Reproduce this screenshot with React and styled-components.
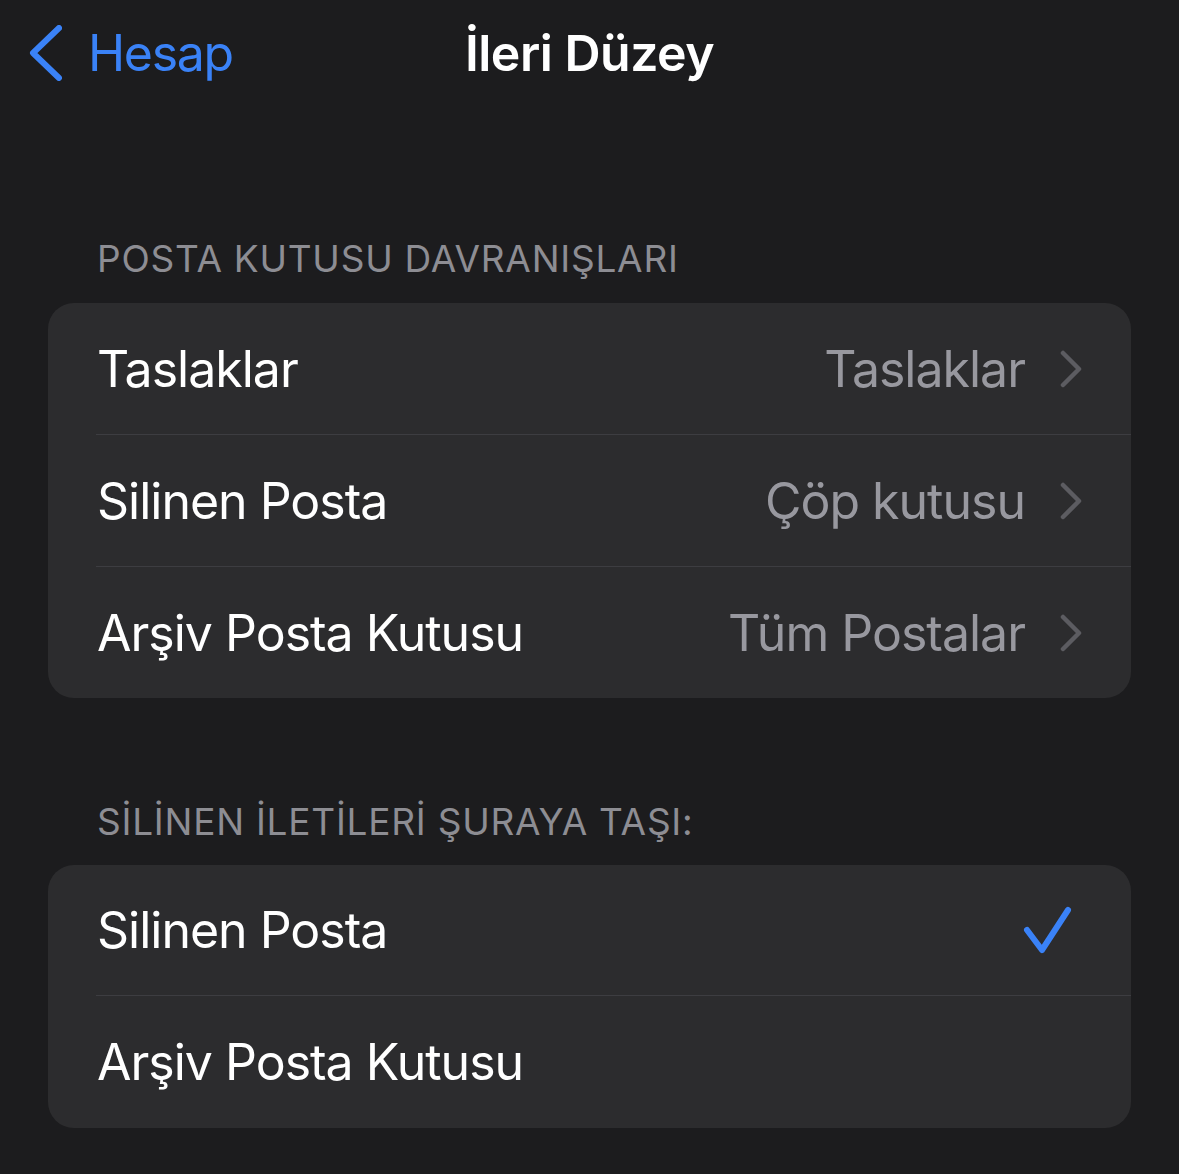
import React from 'react';
import styled, { createGlobalStyle } from 'styled-components';

const GlobalStyle = createGlobalStyle`
  html, body {
    margin: 0;
    padding: 0;
    background: #1c1c1e;
  }
  body {
    font-family: Inter, "Noto Sans", "Liberation Sans", sans-serif;
    -webkit-font-smoothing: antialiased;
  }
`;

const Screen = styled.div`
  min-height: 1174px;
  background: #1c1c1e;
  padding: 0 48px;
  box-sizing: border-box;
`;

const NavBar = styled.div`
  height: 106px;
  display: grid;
  grid-template-columns: 1fr auto 1fr;
  align-items: center;
  margin: 0 -48px;
  padding: 0 28px;
`;

const BackButton = styled.div`
  display: flex;
  align-items: center;
  gap: 26px;
  color: #3a82f7;
  font-size: 50px;
  letter-spacing: -1.3px;
`;

const Title = styled.div`
  color: #ffffff;
  font-size: 50px;
  font-weight: 600;
  letter-spacing: -0.5px;
`;

const SectionLabel = styled.div`
  color: #8d8d93;
  font-size: 37px;
  line-height: 46px;
  padding-left: 49px;
  margin-top: ${(p) => p.$top}px;
  margin-bottom: ${(p) => p.$bottom}px;
  letter-spacing: 0.75px;
`;

const Card = styled.div`
  background: #2c2c2e;
  border-radius: 26px;
  overflow: hidden;
`;

const Row = styled.div`
  height: ${(p) => p.$h}px;
  display: flex;
  align-items: center;
  padding: 0 49px;
`;

const Divider = styled.div`
  height: 1px;
  margin-left: 48px;
  background: #3d3d41;
`;

const Label = styled.div`
  flex: 1;
  color: #ffffff;
  font-size: 50px;
  letter-spacing: -1px;
`;

const Value = styled.div`
  color: #98989f;
  font-size: 50px;
  letter-spacing: -1px;
  margin-right: 35px;
`;

const CheckWrap = styled.div`
  display: flex;
  margin-right: 10px;
`;

const Chevron = () => (
  <svg width="22" height="38" viewBox="0 0 22 38">
    <path d="M3 3 L19 19 L3 35" fill="none" stroke="#5c5c61" strokeWidth="4.5" strokeLinecap="round" strokeLinejoin="round" />
  </svg>
);

const BackChevron = () => (
  <svg width="34" height="56" viewBox="0 0 34 56">
    <path d="M31 3 L5 28 L31 53" fill="none" stroke="#3a82f7" strokeWidth="6" strokeLinecap="round" strokeLinejoin="round" />
  </svg>
);

const Check = () => (
  <svg width="50" height="50" viewBox="0 0 50 50">
    <path d="M5 25 L20 45 L46 5" fill="none" stroke="#3a82f7" strokeWidth="6" strokeLinecap="round" strokeLinejoin="round" />
  </svg>
);

const NavRow = ({ label, value, h }) => (
  <Row $h={h}>
    <Label>{label}</Label>
    <Value>{value}</Value>
    <Chevron />
  </Row>
);

const SelectRow = ({ label, checked, h }) => (
  <Row $h={h}>
    <Label>{label}</Label>
    {checked && (
      <CheckWrap>
        <Check />
      </CheckWrap>
    )}
  </Row>
);

export default function App() {
  return (
    <>
      <GlobalStyle />
      <Screen>
        <NavBar>
          <BackButton>
            <BackChevron />
            <span>Hesap</span>
          </BackButton>
          <Title>İleri Düzey</Title>
          <div />
        </NavBar>

        <SectionLabel $top={130} $bottom={21}>POSTA KUTUSU DAVRANIŞLARI</SectionLabel>
        <Card>
          <NavRow label="Taslaklar" value="Taslaklar" h={131} />
          <Divider />
          <NavRow label="Silinen Posta" value="Çöp kutusu" h={131} />
          <Divider />
          <NavRow label="Arşiv Posta Kutusu" value="Tüm Postalar" h={131} />
        </Card>

        <SectionLabel $top={101} $bottom={20}>SİLİNEN İLETİLERİ ŞURAYA TAŞI:</SectionLabel>
        <Card>
          <SelectRow label="Silinen Posta" checked h={130} />
          <Divider />
          <SelectRow label="Arşiv Posta Kutusu" h={132} />
        </Card>
      </Screen>
    </>
  );
}
